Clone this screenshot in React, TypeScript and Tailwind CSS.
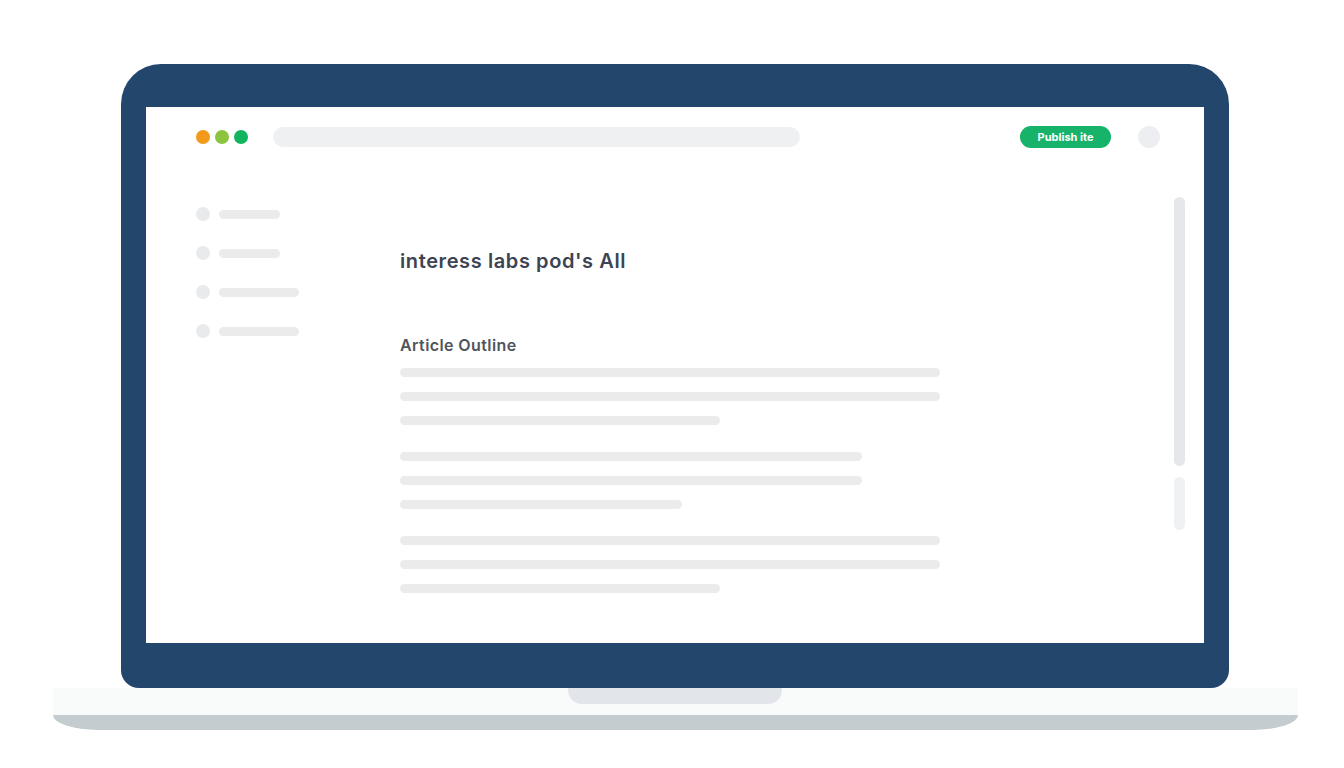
const outline = [
  [540, 540, 320],
  [462, 462, 282],
  [540, 540, 320],
];

function Bar({ w, tone = 'bg-[#ebebeb]' }: { w: number; tone?: string }) {
  return <div className={`h-[9px] rounded-full ${tone}`} style={{ width: w }} />;
}

export default function App() {
  return (
    <div className="flex h-[768px] w-full flex-col items-center bg-white pl-[6px] pt-[64px] font-['Inter',sans-serif]">
      {/* lid */}
      <div className="w-[1108px] rounded-t-[40px] rounded-b-[18px] bg-[#23466d] px-[25px] pt-[43px] pb-[45px]">
        <div className="flex h-[536px] w-full flex-col bg-white">
          {/* window bar */}
          <div className="flex items-center pl-[50px] pr-[44px] pt-[19px]">
            <div className="flex gap-[5px]">
              <span className="h-[14px] w-[14px] rounded-full bg-[#f39a1c]" />
              <span className="h-[14px] w-[14px] rounded-full bg-[#8dc43f]" />
              <span className="h-[14px] w-[14px] rounded-full bg-[#12b45e]" />
            </div>
            <div className="ml-[25px] h-[20px] w-[527px] rounded-full bg-[#eff0f2]" />
            <button className="ml-auto h-[22px] w-[91px] rounded-full bg-[#17b36a] text-[11px] font-bold text-white">
              Publish ite
            </button>
            <span className="ml-[27px] h-[22px] w-[22px] rounded-full bg-[#eceef1]" />
          </div>

          {/* body */}
          <div className="flex flex-1 pl-[50px]">
            <div className="mt-[59px] flex w-[103px] flex-col gap-[25px]">
              {[61, 61, 80, 80].map((w, i) => (
                <div key={i} className="flex items-center gap-[9px]">
                  <span className="h-[14px] w-[14px] rounded-full bg-[#e9eaec]" />
                  <Bar w={w} />
                </div>
              ))}
            </div>

            <div className="ml-[101px] mt-[99px] w-[540px]">
              <h1 className="text-[20px] leading-[28px] font-semibold tracking-[0.6px] text-[#3d4451]">
                interess labs pod's All
              </h1>
              <h2 className="mt-[58px] text-[16px] leading-[24px] font-semibold tracking-[0.4px] text-[#50555c]">
                Article Outline
              </h2>
              <div className="mt-[11px] flex flex-col gap-[27px]">
                {outline.map((group, g) => (
                  <div key={g} className="flex flex-col gap-[15px]">
                    {group.map((w, i) => (
                      <Bar key={i} w={w} />
                    ))}
                  </div>
                ))}
              </div>
            </div>

            <div className="ml-auto mr-[19px] mt-[49px] flex flex-col gap-[11px]">
              <div className="h-[269px] w-[11px] rounded-full bg-[#e5e7ea]" />
              <div className="h-[53px] w-[11px] rounded-full bg-[#f0f1f2]" />
            </div>
          </div>
        </div>
      </div>

      {/* base */}
      <div className="flex w-[1245px] flex-col">
        <div className="flex h-[27px] justify-center bg-[#f9fbfb]">
          <div className="h-[16px] w-[214px] rounded-b-[14px] bg-[#e2e6ea]" />
        </div>
        <div className="h-[15px] bg-[#c4ccd0] [border-radius:0_0_45px_45px/0_0_15px_15px]" />
      </div>
    </div>
  );
}
